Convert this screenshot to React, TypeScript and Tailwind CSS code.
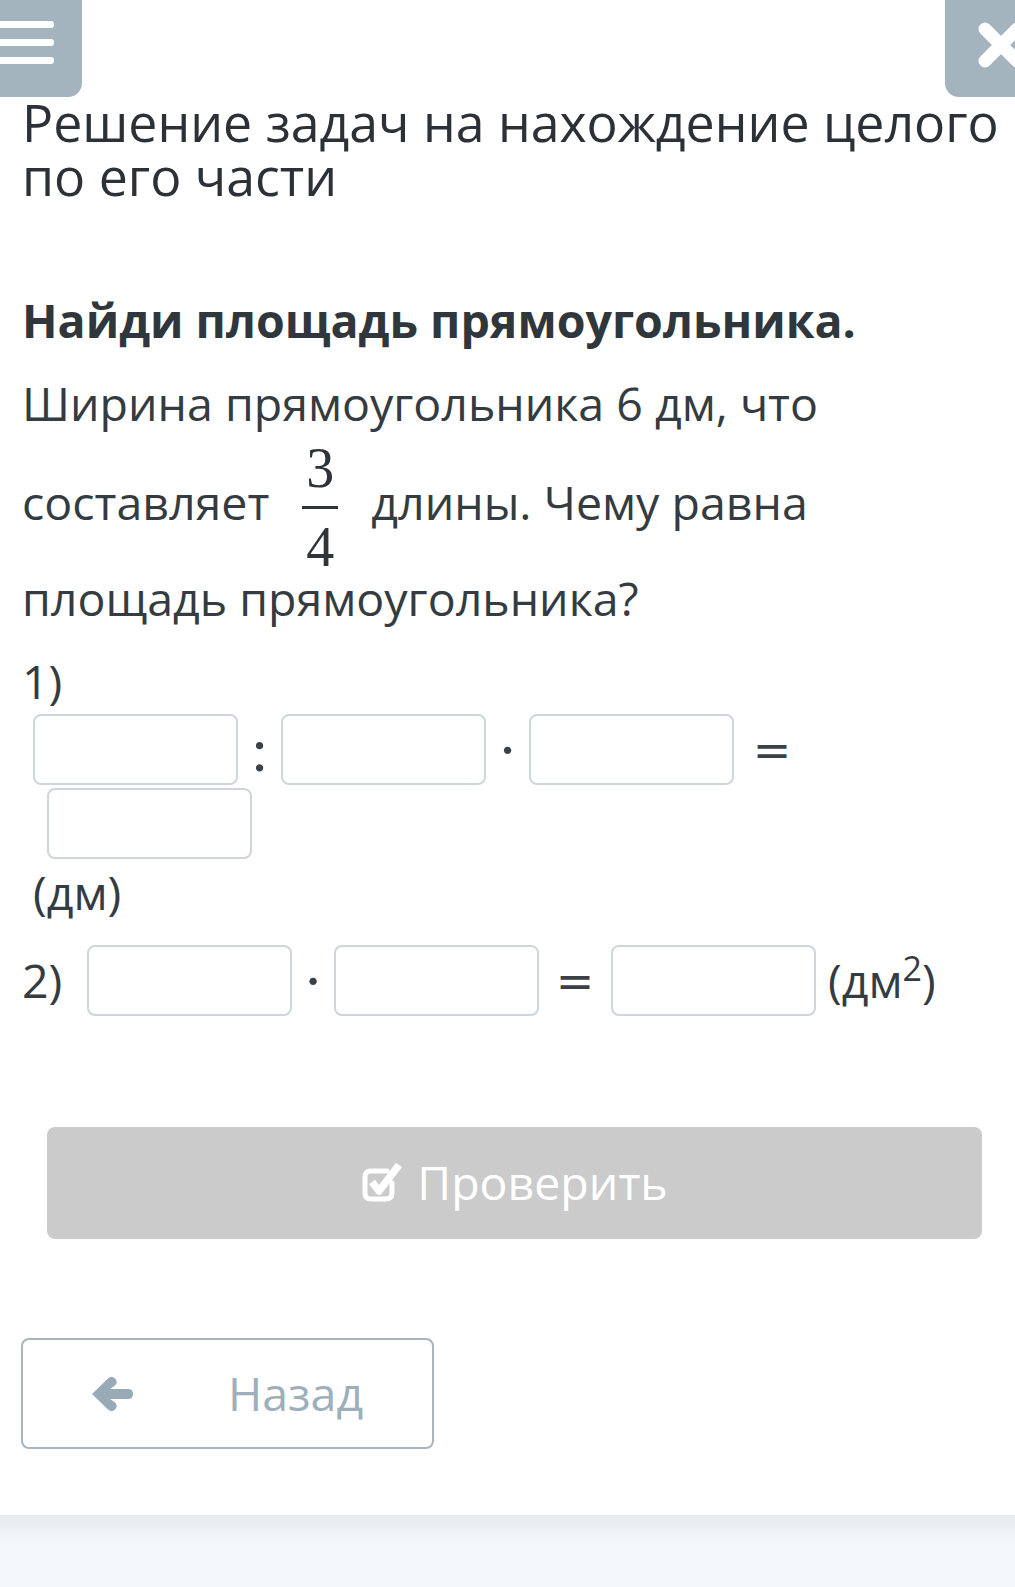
import React from 'react';

const font = { fontFamily: '"Open Sans", "Noto Sans", sans-serif' };
const serif = { fontFamily: '"Liberation Serif", "DejaVu Serif", serif' };
const mathEq = { fontFamily: '"DejaVu Serif", "Liberation Serif", serif' };

function AnswerBox({ className = '' }: { className?: string }) {
  return (
    <input
      type="text"
      className={`h-[71px] w-[205px] shrink-0 rounded-lg border-2 border-[#cdd6da] bg-white outline-none ${className}`}
    />
  );
}

function Op({ children, w = 'w-[43px]' }: { children: React.ReactNode; w?: string }) {
  return (
    <span className={`${w} shrink-0 text-center text-[62px] leading-none text-[#3a4147]`} style={serif}>
      {children}
    </span>
  );
}

function Eq({ w }: { w: string }) {
  return (
    <span className={`${w} shrink-0 text-center text-[46px] leading-none text-[#3a4147]`} style={mathEq}>
      =
    </span>
  );
}

function Fraction() {
  return (
    <span
      className="mx-[33px] -mb-[7px] inline-flex flex-col items-center pt-[7px] align-[33px] text-[56px] leading-[50px] text-[#2e3439]"
      style={serif}
    >
      <span>3</span>
      <span className="my-[13px] h-[3px] w-[36px] bg-[#2e3439]" />
      <span>4</span>
    </span>
  );
}

export default function App() {
  return (
    <div className="relative min-h-[1587px] w-[1015px] bg-white text-[#343b41]" style={font}>
      {/* верхняя панель */}
      <div className="flex h-[97px] items-start justify-between">
        <button className="flex h-[97px] w-[82px] flex-col gap-[11px] rounded-br-[14px] bg-[#a3b4bf] pt-[21px]">
          <span className="h-[7px] w-[54px] rounded-r-[3px] bg-white" />
          <span className="h-[7px] w-[54px] rounded-r-[3px] bg-white" />
          <span className="h-[7px] w-[54px] rounded-r-[3px] bg-white" />
        </button>
        <button className="relative h-[97px] w-[70px] overflow-hidden rounded-bl-[14px] bg-[#a3b4bf]">
          <svg className="absolute left-[33px] top-[22px]" width="46" height="46" viewBox="0 0 46 46">
            <path d="M7 7 L39 39 M39 7 L7 39" stroke="white" strokeWidth="13" strokeLinecap="round" />
          </svg>
        </button>
      </div>

      <div className="px-[22px]">
        <h1 className="-mr-[20px] -mt-[2px] text-[51.8px] leading-[54px] text-[#2b3136]">
          Решение задач на нахождение целого по его части
        </h1>

        <h2 className="mt-[84px] text-[46.5px] font-bold leading-[66px] text-[#30373c]">
          Найди площадь прямоугольника.
        </h2>

        <p className="mt-[17px] text-[46.5px] leading-[66px]">
          Ширина прямоугольника 6 дм, что составляет
          <Fraction />
          длины. Чему равна площадь прямоугольника?
        </p>

        {/* шаг 1 */}
        <div className="mt-[17px] text-[46.5px] leading-[66px]">1)</div>
        <div className="flex items-center pl-[11px]">
          <AnswerBox />
          <Op>:</Op>
          <AnswerBox />
          <Op>·</Op>
          <AnswerBox />
          <Eq w="w-[76px]" />
        </div>
        <div className="mt-[3px] pl-[25px]">
          <AnswerBox />
        </div>
        <div className="pl-[11px] text-[46.5px] leading-[66px]">(дм)</div>

        {/* шаг 2 */}
        <div className="mt-[20px] flex items-center">
          <span className="w-[65px] shrink-0 text-[46.5px] leading-none">2)</span>
          <AnswerBox />
          <Op w="w-[42px]">·</Op>
          <AnswerBox />
          <Eq w="w-[72px]" />
          <AnswerBox />
          <span className="ml-[12px] text-[46.5px] leading-none">
            (дм<sup className="text-[34px]">2</sup>)
          </span>
        </div>

        <button className="ml-[25px] mt-[111px] flex h-[112px] w-[935px] items-center justify-center gap-[12px] rounded-lg bg-[#cbcbcb] text-[46.5px] text-white">
          <svg width="44" height="42" viewBox="0 0 44 42" fill="none">
            <path
              d="M31 21 V31 Q31 37 25 37 H10 Q4 37 4 31 V15 Q4 9 10 9 H26"
              stroke="white"
              strokeWidth="5"
              strokeLinecap="round"
            />
            <path d="M11 20 L18 29 L38 3" stroke="white" strokeWidth="7.5" strokeLinejoin="round" />
          </svg>
          Проверить
        </button>

        <button className="-ml-px mt-[99px] flex h-[111px] w-[413px] items-center rounded-lg border-2 border-[#a9b5bc] bg-white text-[46.5px] text-[#9dafba]">
          <svg className="ml-[67px]" width="44" height="40" viewBox="0 0 44 40">
            <path
              d="M2 20 L18 4.5 Q21.5 1 25 4.5 Q28.5 8 25 11.5 L20 15 L38 15 Q43 15 43 20 Q43 25 38 25 L20 25 L25 28.5 Q28.5 32 25 35.5 Q21.5 39 18 35.5 Z"
              fill="#97aab6"
            />
          </svg>
          <span className="ml-[94px]">Назад</span>
        </button>
      </div>

      <div className="absolute bottom-0 left-0 h-[72px] w-full border-t border-[#e6e7e8] bg-gradient-to-b from-[#e8ebee] to-[#f5f8fb] to-40%" />
    </div>
  );
}
